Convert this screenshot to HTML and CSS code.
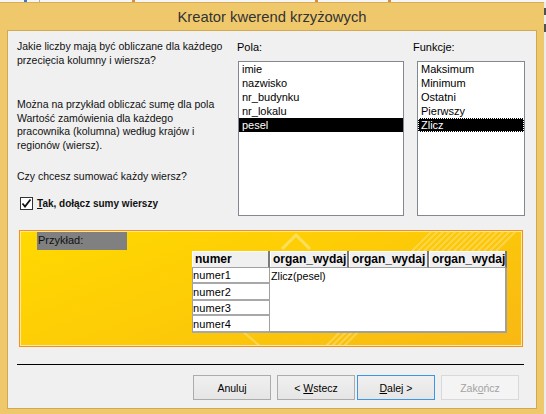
FILE: index.html
```html
<!DOCTYPE html>
<html lang="pl">
<head>
<meta charset="utf-8">
<title>Kreator kwerend krzyżowych</title>
<link rel="stylesheet" href="styles.css">
</head>
<body>
<div class="screen">
  <div class="topstrip">
    <span class="mark m1"></span><span class="mark m2"></span><span class="mark m3"></span><span class="mark m4"></span><span class="mark m5"></span>
  </div>
  <div class="main">
    <div class="window">
      <div class="titlebar">Kreator kwerend krzyżowych</div>
      <div class="client">
        <div class="top">
          <div class="intro">
            <p class="p1">Jakie liczby mają być obliczane dla każdego<br>przecięcia kolumny i wiersza?</p>
            <p class="p2">Można na przykład obliczać sumę dla pola<br>Wartość zamówienia dla każdego<br>pracownika (kolumna) według krajów i<br>regionów (wiersz).</p>
            <p class="p3">Czy chcesz sumować każdy wiersz?</p>
            <div class="check">
              <span class="box"><svg width="11" height="11" viewBox="0 0 11 11"><path d="M1.5 5.5 L4 8.5 L9.5 1.5" fill="none" stroke="#111" stroke-width="1.8"/></svg></span>
              <span class="checklabel"><u>T</u>ak, dołącz sumy wierszy</span>
            </div>
          </div>
          <div class="fields">
            <div class="lbl">Pola:</div>
            <ul class="listbox lb-fields">
              <li>imie</li>
              <li>nazwisko</li>
              <li>nr_budynku</li>
              <li>nr_lokalu</li>
              <li class="sel">pesel</li>
            </ul>
          </div>
          <div class="funcs">
            <div class="lbl">Funkcje:</div>
            <ul class="listbox lb-funcs">
              <li>Maksimum</li>
              <li>Minimum</li>
              <li>Ostatni</li>
              <li>Pierwszy</li>
              <li class="sel focus">Zlicz</li>
            </ul>
          </div>
        </div>
        <div class="example">
          <svg class="deco" width="502" height="115" viewBox="0 0 502 115">
            <path d="M262 18 L276 4 L290 18" fill="none" stroke="#ffe680" stroke-width="3" opacity="0.7"/>
            <g stroke="#ffe27a" stroke-width="2" opacity="0.55">
              <path d="M392 20 L412 0"/><path d="M398 20 L418 0"/><path d="M404 20 L424 0"/><path d="M410 20 L430 0"/>
              <path d="M416 20 L436 0"/><path d="M422 20 L442 0"/><path d="M428 20 L448 0"/><path d="M434 20 L454 0"/>
              <path d="M440 20 L460 0"/><path d="M446 20 L466 0"/><path d="M452 20 L472 0"/><path d="M458 20 L478 0"/>
              <path d="M464 20 L484 0"/><path d="M470 20 L490 0"/><path d="M476 20 L496 0"/>
              <path d="M306 115 L320 101"/><path d="M312 115 L326 101"/><path d="M318 115 L332 101"/><path d="M324 115 L338 101"/>
            </g>
            <path d="M222 100 L240 115" stroke="#ffe27a" stroke-width="2" opacity="0.6"/>
          </svg>
          <div class="exlabel">Przykład:</div>
          <div class="grid">
            <div class="hcell">numer</div>
            <div class="hcell">organ_wydaj</div>
            <div class="hcell">organ_wydaj</div>
            <div class="hcell">organ_wydaj</div>
            <div class="rows">
              <div class="rcell r1">numer1</div>
              <div class="rcell r2">numer2</div>
              <div class="rcell r3">numer3</div>
              <div class="rcell r4">numer4</div>
            </div>
            <div class="data">Zlicz(pesel)</div>
          </div>
        </div>
        <div class="sep"></div>
        <div class="buttons">
          <div class="btn"><span>Anuluj</span></div>
          <div class="btn"><span>&lt;&nbsp;<u>W</u>stecz</span></div>
          <div class="btn def"><span><u>D</u>alej&nbsp;&gt;</span></div>
          <div class="btn dis"><span>Zak<u>o</u>ńcz</span></div>
        </div>
      </div>
    </div>
    <div class="rightstrip">
      <span class="rs rs1"></span><span class="rs rs2"></span>
    </div>
  </div>
</div>
</body>
</html>
```
FILE: styles.css
```css
* { box-sizing: border-box; }
html, body { margin: 0; padding: 0; }
body {
  width: 546px;
  height: 414px;
  overflow: hidden;
  background: #f0f0f0;
  font-family: "Liberation Sans", Arial, sans-serif;
  color: #000;
}
.screen { display: flex; flex-direction: column; height: 414px; }
.topstrip { height: 2px; background: #f6f6f6; display: flex; gap: 0; }
.mark { height: 2px; display: block; }
.m1 { width: 3px; margin-left: 24px; background: #3a78c8; }
.m2 { width: 1px; margin-left: 12px; background: #b0b0b0; }
.m3 { width: 3px; margin-left: 92px; background: #e08a3c; }
.m4 { width: 3px; margin-left: 180px; background: #e08a3c; }
.m5 { width: 3px; margin-left: 70px; background: #e08a3c; }

.main { display: flex; flex: 1; }
.window {
  width: 544px;
  background: #f0c86c;
  border-top: 1px solid #d9ad55;
  padding: 0 7px;
}
.titlebar {
  height: 27px;
  display: flex;
  align-items: center;
  justify-content: center;
  font-size: 14.8px;
  color: #333;
}
.client {
  width: 530px;
  height: 379px;
  border: 1px solid #d3a94f;
  background: #f0f0f0;
  display: flex;
  flex-direction: column;
}
.rightstrip { width: 2px; background: #ececec; display: flex; flex-direction: column; }
.rs { display: block; width: 2px; background: #505050; }
.rs1 { height: 7px; margin-top: 6px; }
.rs2 { height: 8px; margin-top: 9px; }

/* top area */
.top { display: flex; padding: 9px 0 0 9px; height: 185px; }
.intro { width: 220px; font-size: 10.5px; line-height: 13.5px; color: #111; }
.intro p { margin: 0; }
.p2 { margin-top: 31px !important; }
.p3 { margin-top: 18px !important; }
.check { display: flex; align-items: center; margin-top: 13px; height: 14px; padding-left: 3px; }
.box {
  width: 13px; height: 13px;
  border: 1px solid #333;
  background: #fff;
  display: flex; align-items: center; justify-content: center;
}
.checklabel { font-weight: bold; font-size: 10px; margin-left: 4px; }
.checklabel u { text-decoration-thickness: 1px; }

.lbl { font-size: 11px; line-height: 14px; height: 14px; }
.fields { width: 176px; }
.funcs { width: 111px; }
.listbox {
  list-style: none;
  margin: 7px 0 0 0;
  padding: 0;
  height: 155px;
  background: #fff;
  border: 1px solid #828790;
  font-size: 11px;
}
.lb-fields { margin-left: 1px; width: 166px; }
.lb-funcs { margin-left: 4px; width: 108px; }
.listbox li { height: 14px; line-height: 14px; padding-left: 3px; white-space: nowrap; }
.listbox li.sel { background: #000; color: #fff; }
.listbox li.focus { outline: 1px dotted #fff; outline-offset: -1px; }

/* example panel */
.example {
  position: relative;
  margin: 14px 0 0 11px;
  width: 504px;
  height: 117px;
  border: 1px solid #f5901a;
  background: linear-gradient(160deg, #ffd900 0%, #fdcc06 45%, #f8b815 100%);
  box-shadow: inset 0 0 0 1px #ffe9a0;
  padding: 1px 0 0 17px;
}
.deco { position: absolute; left: 0; top: 0; }
.exlabel {
  position: relative;
  width: 90px;
  height: 18px;
  background: #808080;
  font-size: 11px;
  line-height: 16px;
  padding-left: 1px;
  color: #111;
}
.grid {
  position: relative;
  margin: 1px 0 0 155px;
  display: grid;
  grid-template-columns: 78px 79px 80px 78px;
  grid-template-rows: 17px 65px;
  width: 315px;
}
.hcell {
  background: #f0f0f0;
  font-weight: bold;
  font-size: 12px;
  line-height: 16px;
  padding-left: 3px;
  border-right: 2px solid #7a7a7a;
  border-bottom: 1px solid #a0a0a0;
  box-shadow: inset 1px 1px 0 #ffffff;
  white-space: nowrap;
  overflow: hidden;
}
.rows { display: flex; flex-direction: column; }
.rcell {
  background: #fff;
  font-size: 11px;
  border-left: 1px solid #a0a0a0;
  border-right: 1px solid #a0a0a0;
  border-bottom: 2px solid #a8a8a8;
  display: flex;
  align-items: center;
  padding-left: 0;
  letter-spacing: 0.1px;
}
.r1 { height: 16px; }
.r2 { height: 17px; }
.r3 { height: 15px; }
.r4 { height: 17px; }
.data {
  grid-column: 2 / span 3;
  background: #fff;
  font-size: 10.7px;
  padding: 2px 0 0 1px;
  border-right: 2px solid #a0a0a0;
  border-bottom: 2px solid #a0a0a0;
}

.sep { margin: 17px 0 0 9px; width: 507px; height: 1px; background: #000; }

.buttons { display: flex; margin: 10px 0 0 185px; gap: 6px; }
.btn {
  width: 78px;
  height: 25px;
  border: 1px solid #acacac;
  background: linear-gradient(#f0f0f0, #e5e5e5);
  font-size: 10.5px;
  display: flex;
  align-items: center;
  justify-content: center;
  color: #000;
}
.btn u { text-decoration-thickness: 1px; }
.btn.def { border-color: #3c95e6; margin-left: -4px; }
.btn.dis { border-color: #d9d9d9; background: #f4f4f4; color: #a3a3a3; }
```
